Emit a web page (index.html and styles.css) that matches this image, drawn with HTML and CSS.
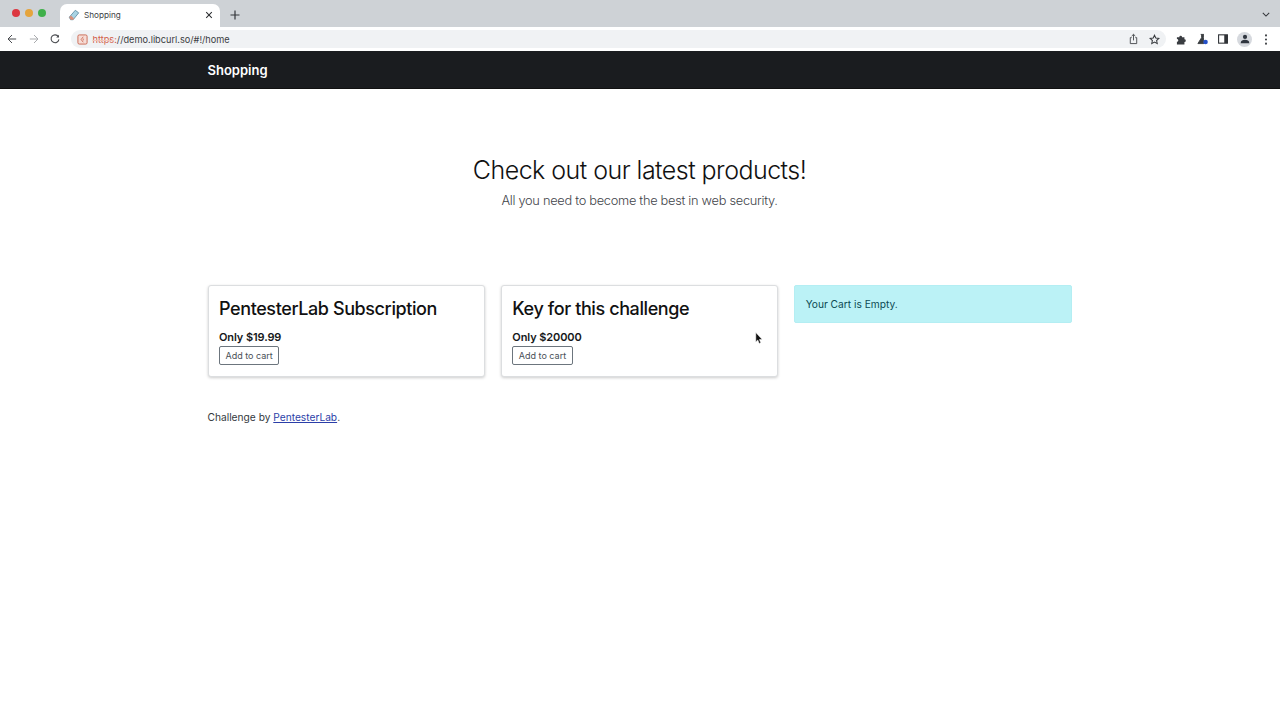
FILE: index.html
```html
<!DOCTYPE html>
<html lang="en">
<head>
<meta charset="utf-8">
<title>Shopping</title>
<link rel="stylesheet" href="styles.css">
</head>
<body>
<header class="chrome">
  <div class="tabstrip">
    <div class="lights"><i class="light red"></i><i class="light amber"></i><i class="light green"></i></div>
    <div class="tab">
      <svg class="favicon" viewBox="0 0 14 14" width="12" height="12"><path d="M1.500 9.500 8.500 1.500l4 3-6.500 8H3z" fill="#a9d3e3" stroke="#5f8ea3" stroke-width="1"/><path d="M1.500 9.500 3 12.500h3l1-1.500-3.500-3.500z" fill="#d98f7a"/></svg>
      <span class="tab-title">Shopping</span>
      <svg class="tab-close" viewBox="0 0 10 10" width="8" height="8"><path d="M1.500 1.500l7 7M8.500 1.500l-7 7" stroke="#2b2d30" stroke-width="1.300"/></svg>
    </div>
    <svg class="new-tab" viewBox="0 0 10 10" width="10" height="10"><path d="M5 .5v9M.5 5h9" stroke="#33363a" stroke-width="1.200"/></svg>
    <svg class="tabs-menu" viewBox="0 0 10 6" width="8" height="5"><path d="M1 1l4 4 4-4" fill="none" stroke="#33363a" stroke-width="1.300"/></svg>
  </div>
  <div class="toolbar">
    <svg class="nav-icon" viewBox="0 0 12 12" width="10" height="10"><path d="M11 6H1.500M6 1.200 1.200 6 6 10.800" fill="none" stroke="#4a4c50" stroke-width="1.200"/></svg>
    <svg class="nav-icon" viewBox="0 0 12 12" width="10" height="10"><path d="M1 6h9.500M6 1.200 10.800 6 6 10.800" fill="none" stroke="#a9abae" stroke-width="1.200"/></svg>
    <svg class="nav-icon" viewBox="0 0 12 12" width="10" height="10"><path d="M10 3.200A4.700 4.700 0 1 0 10.700 6.500" fill="none" stroke="#4a4c50" stroke-width="1.300"/><path d="M10.800.8v3.400H7.400z" fill="#4a4c50"/></svg>
    <div class="omnibox">
      <div class="url">
        <svg class="sec-icon" viewBox="0 0 12 12" width="11" height="11"><rect x="1" y="1" width="10" height="10" rx="1.500" fill="#f6dcd6" stroke="#c9664f" stroke-width="1"/><path d="M6.800 3 4.500 6l2.300 3M6.800 5v2" fill="none" stroke="#c9664f" stroke-width=".9"/></svg>
        <span><s class="scheme">https</s><span class="colon">:</span>//demo.libcurl.so/#!/home</span>
      </div>
      <div class="omni-actions">
        <svg viewBox="0 0 12 12" width="11" height="12"><path d="M4 4.500H2.500v6.500h7V4.500H8M6 7.500V1M4 2.800 6 .9l2 1.900" fill="none" stroke="#45484c" stroke-width="1"/></svg>
        <svg viewBox="0 0 12 12" width="11" height="11"><path d="M6 1.300l1.400 3.100 3.400.4-2.500 2.300.7 3.400L6 8.800l-3 1.700.7-3.400L1.200 4.800l3.400-.4z" fill="none" stroke="#35383c" stroke-width="1.100"/></svg>
      </div>
    </div>
    <div class="extensions">
      <svg viewBox="0 0 12 12" width="11" height="11"><path d="M1 3.500h2.600a1.500 1.500 0 1 1 3 0h2.600v2.300a1.500 1.500 0 1 1 0 3v2.600H1V8.500a1.500 1.500 0 1 0 0-3z" fill="#3a3d41"/></svg>
      <svg viewBox="0 0 12 12" width="11" height="12"><path d="M4 1h3.500M5 1v3.500L1 11h6.500L7 4.500V1" fill="#3a3d41" stroke="#3a3d41"/><circle class="flask-dot" cx="9.300" cy="9.300" r="2.500"/></svg>
      <svg class="panel" viewBox="0 0 12 12" width="10" height="10"><rect x=".7" y="1" width="10.600" height="10" fill="#fff" stroke="#303337" stroke-width="1.300"/><rect x="7.500" y="1" width="4" height="10" fill="#303337"/></svg>
      <span class="avatar"><svg viewBox="0 0 12 12" width="10" height="10"><circle cx="6" cy="3.500" r="2.500" fill="#30363f"/><path d="M.8 11c0-3 2.500-4 5.200-4s5.200 1 5.200 4z" fill="#30363f"/></svg></span>
      <svg class="kebab" viewBox="0 0 4 12" width="4" height="11"><circle cx="2" cy="1.500" r="1.100" fill="#3a3d41"/><circle cx="2" cy="6" r="1.100" fill="#3a3d41"/><circle cx="2" cy="10.500" r="1.100" fill="#3a3d41"/></svg>
    </div>
  </div>
</header>
<nav class="navbar"><div class="container"><a class="brand">Shopping</a></div></nav>
<main class="container">
  <section class="hero">
    <h1>Check out our latest products!</h1>
    <p>All you need to become the best in web security.</p>
  </section>
  <section class="shop">
    <article class="card">
      <h2>PentesterLab Subscription</h2>
      <div class="price">Only $19.99</div>
      <button class="btn">Add to cart</button>
    </article>
    <article class="card">
      <h2>Key for this challenge</h2>
      <div class="price">Only $20000</div>
      <button class="btn">Add to cart</button>
    </article>
    <div class="alert">Your Cart is Empty.</div>
  </section>
  <footer class="foot">Challenge by <a href="#">PentesterLab</a>.</footer>
</main>
<svg class="cursor" viewBox="0 0 8 13" width="8" height="13"><path d="M.8.600v9.300l2-1.900 1.400 3.500 1.600-.7L4.400 7.500h2.800z" fill="#111" stroke="#fff" stroke-width=".5"/></svg>
</body>
</html>
```
FILE: styles.css
```css
* { box-sizing: border-box; }
html, body { margin: 0; height: 100%; }
body {
  position: relative;
  overflow: hidden;
  background: #fff;
  color: #212529;
  font-family: Inter, "Liberation Sans", sans-serif;
  font-size: 11px;
}
.chrome { height: 51px; background: #fff; }
.tabstrip {
  display: flex;
  align-items: flex-end;
  height: 27px;
  padding-left: 12px;
  background: #ced2d6;
}
.lights { display: flex; gap: 5px; align-self: flex-start; margin-top: 9px; width: 48px; }
.light { width: 8px; height: 8px; border-radius: 50%; }
.red { background: #dc3740; }
.amber { background: #e5a43c; }
.green { background: #3fb04a; }
.tab {
  display: flex;
  align-items: center;
  width: 160px;
  height: 23px;
  padding: 0 7px 2px 8px;
  background: #fff;
  border-radius: 7px 7px 0 0;
}
.tab-title { flex: 1; margin-left: 4px; font-size: 8.200px; color: #3c4043; }
.new-tab { align-self: center; margin: 2px 0 0 10px; }
.tabs-menu { align-self: center; margin: 2px 10px 0 auto; }
.toolbar { display: flex; align-items: center; height: 23px; padding: 1px 0 0 7px; }
.nav-icon { margin-right: 11.500px; }
.omnibox {
  display: flex;
  align-items: center;
  justify-content: space-between;
  flex: 1;
  height: 18px;
  margin-left: -1px;
  padding: 0 6px 0 6px;
  background: #f0f2f4;
  border-radius: 9px;
}
.url { display: flex; align-items: center; gap: 5px; font-size: 9.200px; color: #3c4043; }
.scheme { color: #d2604a; text-decoration: line-through; text-decoration-color: #f2c4b8; }
.colon { color: #d2604a; }
.omni-actions { display: flex; align-items: center; gap: 10px; }
.extensions { display: flex; align-items: center; gap: 10px; padding: 0 12px 0 10px; }
.flask-dot { fill: #2450c8; }
.panel { margin-right: -1px; }
.avatar {
  display: flex;
  align-items: center;
  justify-content: center;
  width: 15px;
  height: 15px;
  border-radius: 50%;
  background: #d6d9de;
}
.kebab { margin-left: 2px; }
.navbar { display: flex; align-items: center; height: 38px; background: #1a1c1f; border-bottom: 1px solid #111; }
.container { width: 864px; margin: 0 0 0 207.500px; }
.brand { color: #fff; font-size: 13px; font-weight: 600; }
.hero { padding-top: 65px; text-align: center; }
.hero h1 { margin: 0; font-size: 25px; font-weight: 300; line-height: 32px; letter-spacing: -.53px; color: #111; }
.hero p { margin: 5px 0 0; font-size: 12.800px; font-weight: 300; line-height: 20px; letter-spacing: -.28px; color: #3f444a; }
.shop { display: grid; grid-template-columns: repeat(3, 1fr); gap: 16px; align-items: start; margin-top: 74px; }
.card {
  height: 92px;
  padding: 11.500px 10.500px 0;
  background: #fff;
  border: 1px solid #dcdee0;
  border-radius: 3px;
  box-shadow: 0 1px 3px rgba(0,0,0,.2);
}
.card h2 { margin: 0 0 10.500px; font-size: 18px; font-weight: 500; line-height: 22px; letter-spacing: -.4px; color: #111; }
.price { font-size: 11px; font-weight: 600; line-height: 14px; letter-spacing: -.1px; color: #16181a; }
.btn {
  display: block;
  height: 19.500px;
  margin-top: 1.500px;
  padding: 0 5.500px;
  background: #fff;
  border: 1px solid #6c757d;
  border-radius: 2px;
  font: inherit;
  font-size: 9px;
  color: #495057;
}
.alert {
  height: 38px;
  padding: 0 10.500px;
  background: #bbf2f6;
  border: 1px solid #b4eef3;
  border-radius: 2px;
  font-size: 10.200px;
  line-height: 36px;
  color: #0c4a54;
}
.foot { margin-top: 33px; font-size: 10.200px; line-height: 14px; color: #33383d; }
.foot a { color: #2b3ea8; }
.cursor { position: absolute; left: 755px; top: 332px; }
```
